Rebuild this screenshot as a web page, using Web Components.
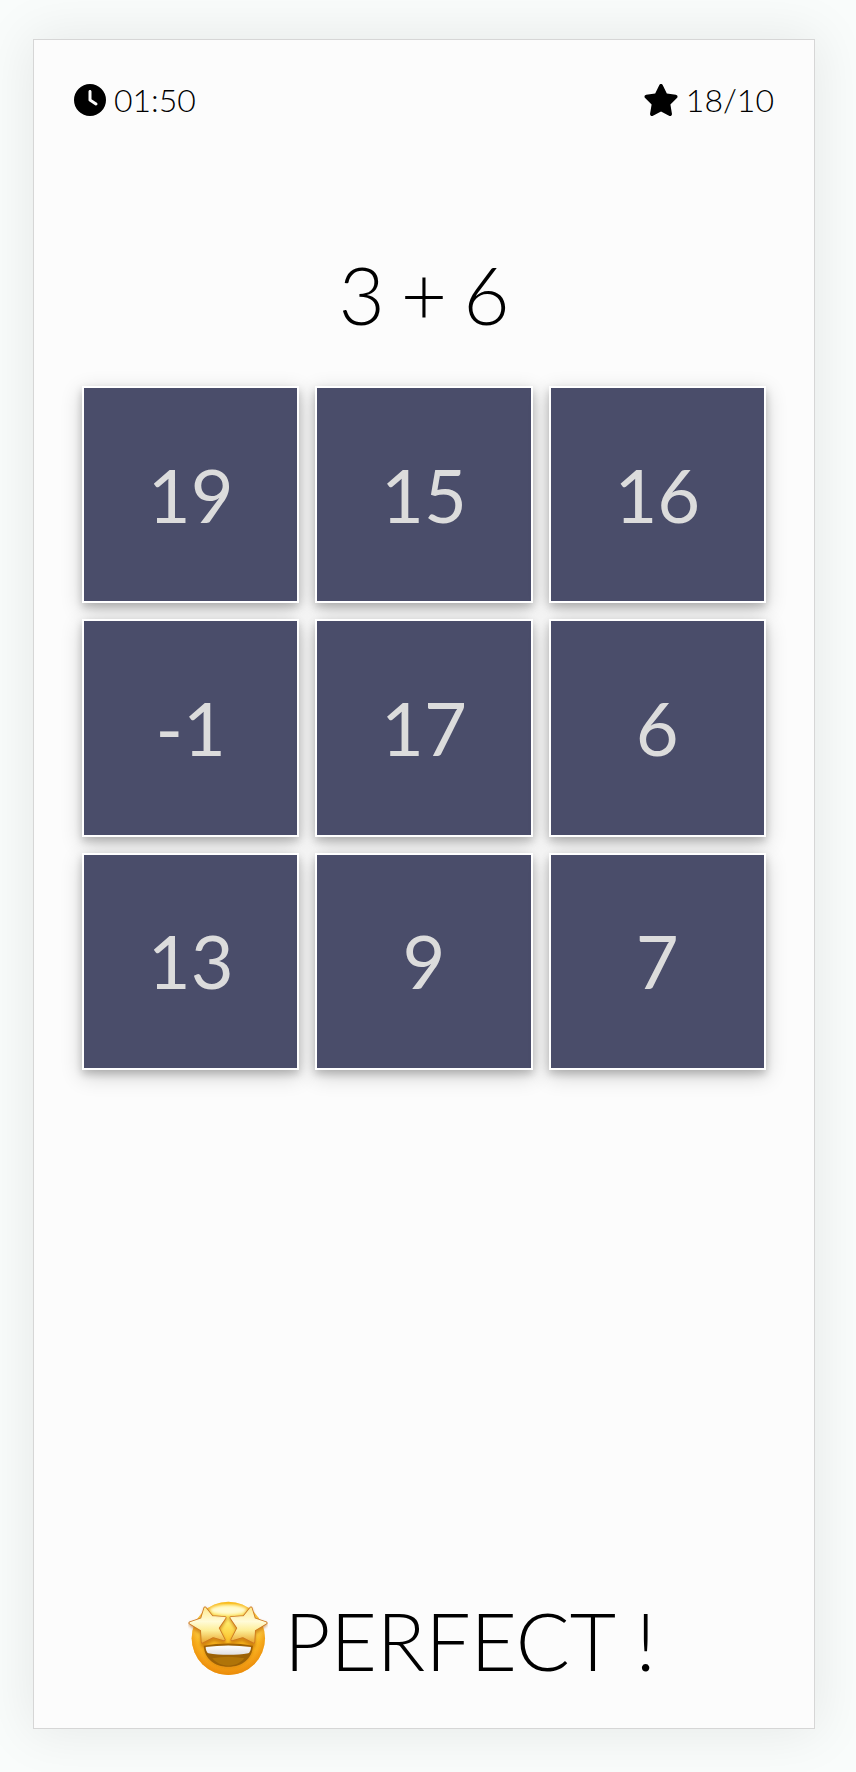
<!DOCTYPE html>
<html lang="en">
<head>
<meta charset="utf-8">
<meta name="viewport" content="width=device-width, initial-scale=1">
<title>Mental arithmetic</title>
<style>
  body { margin: 0; background: #f9fcfb; color: #000; font-family: Lato, sans-serif; font-weight: 300; }
</style>
</head>
<body>
<math-game></math-game>

<template id="game-tpl">
  <style>
    :host { display: flex; box-sizing: border-box; min-height: 100vh; padding: 39px 41px 43px 33px; }
    main { flex: 1; box-sizing: border-box; display: flex; flex-direction: column; padding: 40px;
      background: #fcfcfc; border: 1px solid #d6d6d6; box-shadow: 0 0 50px 4px rgba(0, 0, 0, .08); }
    header { display: flex; justify-content: space-between; }
    h1 { display: flex; justify-content: center; gap: 16px; margin: 126px 0 44px; font-size: 80px; line-height: 96px; font-weight: 300; }
    result-message { margin-top: auto; }
  </style>
  <main>
    <header>
      <game-stat icon="clock">01:50</game-stat>
      <game-stat icon="star">18/10</game-stat>
    </header>
    <h1><span>3</span> <span>+</span> <span>6</span></h1>
    <answer-grid>
      <answer-tile>19</answer-tile>
      <answer-tile>15</answer-tile>
      <answer-tile>16</answer-tile>
      <answer-tile>-1</answer-tile>
      <answer-tile>17</answer-tile>
      <answer-tile>6</answer-tile>
      <answer-tile>13</answer-tile>
      <answer-tile>9</answer-tile>
      <answer-tile>7</answer-tile>
    </answer-grid>
    <result-message>PERFECT !</result-message>
  </main>
</template>

<template id="stat-tpl">
  <style>
    :host { display: flex; align-items: center; gap: 8px; font-size: 32px; line-height: 40px; }
    svg { display: none; height: 32px; fill: #000; }
    :host([icon="clock"]) .clock, :host([icon="star"]) .star { display: block; }
    .clock { width: 32px; }
    .star { width: 34px; }
  </style>
  <svg class="clock" viewBox="0 0 512 512" aria-hidden="true"><path d="M256 0a256 256 0 1 1 0 512A256 256 0 1 1 256 0zM232 120V256c0 8 4 15.500 10.700 20l96 64c11 7.400 25.900 4.400 33.300-6.700s4.400-25.900-6.700-33.300L280 243.200V120c0-13.300-10.700-24-24-24s-24 10.700-24 24z"/></svg>
  <svg class="star" viewBox="20 0 536 512" aria-hidden="true"><path d="M316.900 18C311.600 7 300.400 0 288.100 0s-23.400 7-28.800 18L195 150.300 51.400 171.500c-12 1.800-22 10.200-25.700 21.700s-.7 24.200 7.900 32.700L137.800 329 113.200 474.700c-2 12 3 24.200 12.900 31.300s23 8 33.800 2.300l128.300-68.500 128.300 68.500c10.800 5.700 23.900 4.900 33.800-2.300s14.900-19.300 12.900-31.300L438.500 329 542.700 225.900c8.600-8.500 11.700-21.200 7.900-32.700s-13.700-19.900-25.700-21.700L381.200 150.300 316.900 18z"/></svg>
  <span><slot></slot></span>
</template>

<template id="grid-tpl">
  <style>
    :host { display: grid; grid-template-columns: repeat(3, 1fr); gap: 16px; margin: 0 8px; }
  </style>
  <slot></slot>
</template>

<template id="tile-tpl">
  <style>
    :host { display: block; aspect-ratio: 1; }
    button { display: block; box-sizing: border-box; width: 100%; height: 100%; margin: 0; padding: 0;
      border: 2px solid #fff; background: #4a4d6a; color: #dcdcdc; font: 400 74px/88px Lato, sans-serif; cursor: pointer;
      box-shadow: 0 4px 8px 0 rgba(0, 0, 0, .2), 0 6px 20px 0 rgba(0, 0, 0, .19); }
  </style>
  <button type="button"><slot></slot></button>
</template>

<template id="message-tpl">
  <style>
    :host { display: flex; justify-content: center; align-items: center; gap: 16px; padding-right: 4px; font-size: 80px; line-height: 96px; }
    svg { display: block; width: 80px; height: 80px; margin-bottom: 8px; }
  </style>
  <svg viewBox="45 51 240 240" role="img" aria-label="Star-struck face">
    <defs>
      <linearGradient id="face" x1="0" y1="0" x2="0" y2="1">
        <stop offset="0" stop-color="#ffd329"/><stop offset=".12" stop-color="#ffe766"/><stop offset=".3" stop-color="#ffea68"/><stop offset=".55" stop-color="#fcbf27"/><stop offset=".85" stop-color="#f8a91e"/><stop offset="1" stop-color="#f39a12"/>
      </linearGradient>
      <radialGradient id="rim" cx=".5" cy=".46" r=".54">
        <stop offset=".72" stop-color="#ef8d0d" stop-opacity="0"/><stop offset="1" stop-color="#e98a08" stop-opacity=".85"/>
      </radialGradient>
      <linearGradient id="star" gradientUnits="userSpaceOnUse" x1="0" y1="84" x2="0" y2="192">
        <stop offset="0" stop-color="#ffe98a"/><stop offset=".4" stop-color="#fffbd8"/><stop offset=".65" stop-color="#fdee98"/><stop offset="1" stop-color="#e9a52a"/>
      </linearGradient>
      <linearGradient id="teeth" x1="0" y1="0" x2="0" y2="1">
        <stop offset="0" stop-color="#fff"/><stop offset="1" stop-color="#dfdfe2"/>
      </linearGradient>
      <filter id="soft"><feGaussianBlur stdDeviation="4"/></filter>
    </defs>
    <circle cx="166" cy="178" r="110" fill="url(#face)"/>
    <circle cx="166" cy="178" r="110" fill="url(#rim)"/>
    <ellipse cx="166" cy="93" rx="54" ry="14" fill="#fffbd0" filter="url(#soft)"/>
    <path d="M91 202q75-14 151 0c-1 36-32 65-76 65s-74-29-75-65z" fill="#df8d0d" filter="url(#soft)"/>
    <path d="M92 200q74-13 148 0c-3 38-31 63-74 63s-71-25-74-63z" fill="#9c6206"/>
    <path d="M118 238q48-10 96 0c-11 14-28 22-48 22s-37-8-48-22z" fill="#b07408"/>
    <path d="M98 204q68-9 136 0c0 9-3 15-8 19-35 6-85 6-120 0-5-4-8-10-8-19z" fill="url(#teeth)"/>
    <g stroke-linejoin="round">
      <g fill="#b85f00" stroke="#b85f00" stroke-width="8" opacity=".6" filter="url(#soft)">
        <path d="M97 90l21 26 40 3-21 34 18 38-34-8-34 18-2-38-34-27 37-12z"/>
        <path d="M233 90l-21 26-40 3 21 34-18 38 34-8 34 18 2-38 34-27-37-12z"/>
      </g>
      <g fill="#cd7720" stroke="#cd7720" stroke-width="9">
        <path d="M96 87L117 113 156 116 135 147 153 182 120 172 88 189 86 153 51 132 86 120z"/>
        <path d="M234 87L213 113 174 116 195 147 177 182 210 172 242 189 244 153 279 132 244 120z"/>
      </g>
      <g fill="url(#star)" stroke="url(#star)" stroke-width="4">
        <path d="M96 87L117 113 156 116 135 147 153 182 120 172 88 189 86 153 51 132 86 120z"/>
        <path d="M234 87L213 113 174 116 195 147 177 182 210 172 242 189 244 153 279 132 244 120z"/>
      </g>
    </g>
  </svg>
  <span><slot></slot></span>
</template>

<script>
  function define(name, templateId) {
    customElements.define(name, class extends HTMLElement {
      constructor() {
        super();
        this.attachShadow({ mode: "open" })
          .append(document.getElementById(templateId).content.cloneNode(true));
      }
    });
  }
  define("game-stat", "stat-tpl");
  define("answer-grid", "grid-tpl");
  define("answer-tile", "tile-tpl");
  define("result-message", "message-tpl");
  define("math-game", "game-tpl");
</script>
</body>
</html>
